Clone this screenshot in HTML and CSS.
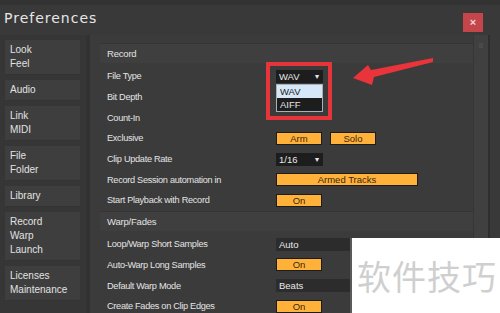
FILE: index.html
```html
<!DOCTYPE html>
<html>
<head>
  <title>Preferences</title>
  <link rel="stylesheet" href="styles.css">
</head>
<body>
  <div class="window">
    <div class="title-bar">
      <div class="title">Preferences</div>
      <div class="close-btn">&#215;</div>
    </div>

    <div class="body">
      <div class="sidebar">
        <div class="tab">Look<br>Feel</div>
        <div class="tab">Audio</div>
        <div class="tab">Link<br>MIDI</div>
        <div class="tab">File<br>Folder</div>
        <div class="tab">Library</div>
        <div class="tab">Record<br>Warp<br>Launch</div>
        <div class="tab">Licenses<br>Maintenance</div>
      </div>

      <div class="divider"></div>

      <div class="main">
        <div class="section-header">Record</div>
        <div class="row">
          <div class="label">File Type</div>
          <div class="control">
            <div class="dropdown-wrap">
              <div class="dropdown small">WAV <span class="arrow">&#9662;</span></div>
              <div class="dropdown-list">
                <div class="list-item selected">WAV</div>
                <div class="list-item">AIFF</div>
              </div>
              <div class="highlight-box"></div>
            </div>
          </div>
        </div>
        <div class="row">
          <div class="label">Bit Depth</div>
        </div>
        <div class="row">
          <div class="label">Count-In</div>
        </div>
        <div class="row">
          <div class="label">Exclusive</div>
          <div class="control">
            <div class="btn">Arm</div>
            <div class="btn">Solo</div>
          </div>
        </div>
        <div class="row">
          <div class="label">Clip Update Rate</div>
          <div class="control">
            <div class="dropdown small">1/16 <span class="arrow">&#9662;</span></div>
          </div>
        </div>
        <div class="row">
          <div class="label">Record Session automation in</div>
          <div class="control">
            <div class="btn wide">Armed Tracks</div>
          </div>
        </div>
        <div class="row">
          <div class="label">Start Playback with Record</div>
          <div class="control">
            <div class="btn">On</div>
          </div>
        </div>

        <div class="section-header">Warp/Fades</div>
        <div class="row">
          <div class="label">Loop/Warp Short Samples</div>
          <div class="control">
            <div class="dropdown flat">Auto</div>
          </div>
        </div>
        <div class="row">
          <div class="label">Auto-Warp Long Samples</div>
          <div class="control">
            <div class="btn">On</div>
          </div>
        </div>
        <div class="row">
          <div class="label">Default Warp Mode</div>
          <div class="control">
            <div class="dropdown flat">Beats</div>
          </div>
        </div>
        <div class="row">
          <div class="label">Create Fades on Clip Edges</div>
          <div class="control">
            <div class="btn">On</div>
          </div>
        </div>
      </div>

      <div class="scrollbar"><div class="scroll-thumb"></div></div>
    </div>
  </div>

  <!-- annotation arrow drawn on top of the screenshot -->
  <svg class="annotation" width="500" height="313" viewBox="0 0 500 313">
    <polygon points="353,78 368,65 371,70 433,58 433,62 374,77 372,85" fill="#e8343a"/>
  </svg>

  <div class="watermark">软件技巧</div>
</body>
</html>
```

FILE: styles.css
```css
body {
  margin: 0;
  width: 500px;
  height: 313px;
  overflow: hidden;
  position: relative;
  background-color: #393939;
  font-family: "Liberation Sans", Arial, sans-serif;
  color: #dcdcdc;
}

.window {
  border-top: 5px solid #333333;
}

.title-bar {
  display: flex;
  align-items: center;
  justify-content: space-between;
  height: 30px;
  padding: 0 17px 0 4px;
}

.title {
  font-family: "DejaVu Sans", sans-serif;
  font-size: 14px;
  letter-spacing: 1px;
  color: #e6e6e6;
  margin-top: -5px;
}

.close-btn {
  width: 20px;
  height: 19px;
  margin-top: 5px;
  background-color: #c4464b;
  color: #f4d4d4;
  font-size: 11px;
  font-weight: bold;
  line-height: 19px;
  text-align: center;
}

.body {
  display: flex;
  height: 278px;
}

/* left navigation */
.sidebar {
  width: 86px;
  padding: 5px 0 0 5px;
  box-sizing: border-box;
  display: flex;
  flex-direction: column;
  gap: 5px;
  background-color: #363636;
}

.tab {
  width: 75px;
  padding: 3px 5px;
  box-sizing: border-box;
  font-size: 10px;
  line-height: 14px;
  color: #e2e2e2;
  background-color: #3e3e3e;
  border-bottom: 1px solid #333333;
}

.divider {
  width: 4px;
  background-color: #323232;
}

/* main panel */
.main {
  width: 383px;
  padding: 8px 0 0 10px;
  box-sizing: border-box;
  background-color: #3b3b3b;
}

.section-header {
  height: 20px;
  line-height: 20px;
  padding-left: 7px;
  font-size: 9.5px;
  letter-spacing: -0.2px;
  color: #e2e2e2;
  background-color: #3f3f3f;
  border-top: 1px solid #353535;
  box-sizing: border-box;
  margin-bottom: 3px;
}

.row {
  display: flex;
  align-items: center;
  height: 20.7px;
  padding-left: 7px;
}

.label {
  width: 169px;
  flex-shrink: 0;
  font-size: 9.2px;
  letter-spacing: -0.3px;
  color: #e4e4e4;
}

.control {
  display: flex;
  gap: 8px;
  align-items: center;
}

.btn {
  width: 44px;
  height: 11px;
  line-height: 11px;
  text-align: center;
  font-size: 9.5px;
  color: #3a2810;
  background-color: #ffb13a;
  border: 1px solid #1e1c18;
}

.btn.wide {
  width: 140px;
}

.dropdown {
  height: 13px;
  line-height: 13px;
  font-size: 9.5px;
  color: #e8e8e8;
  background-color: #1d1d1d;
  padding-left: 3px;
  box-sizing: border-box;
}

.dropdown.small {
  width: 47px;
  display: flex;
  justify-content: space-between;
  padding-right: 4px;
}

.dropdown .arrow {
  font-size: 8px;
}

.dropdown.flat {
  width: 90px;
  background-color: #2c2c2c;
}

.dropdown-wrap {
  position: relative;
}

.dropdown-list {
  position: absolute;
  top: 14px;
  left: 0;
  width: 47px;
  border: 1px solid #a8b0b8;
  box-sizing: border-box;
  background-color: #1d1d1d;
  z-index: 2;
}

.list-item {
  height: 13px;
  line-height: 13px;
  padding-left: 3px;
  font-size: 9.5px;
  color: #e4e4e4;
}

.list-item.selected {
  background-color: #d6e8f8;
  color: #1c1c1c;
}

.highlight-box {
  position: absolute;
  top: -8px;
  left: -10px;
  width: 66px;
  height: 58px;
  border: 4px solid #e5343a;
  box-sizing: border-box;
  z-index: 3;
}

.scrollbar {
  width: 14px;
  background-color: #404040;
  border-left: 1px solid #363636;
  border-right: 2px solid #2e2e2e;
}

.scroll-thumb {
  width: 4px;
  height: 5px;
  margin: 8px auto 0;
  background-color: #4a4a4a;
}

.annotation {
  position: absolute;
  top: 0;
  left: 0;
  pointer-events: none;
}

.watermark {
  position: absolute;
  left: 350px;
  top: 238px;
  width: 150px;
  height: 75px;
  padding-left: 5px;
  box-sizing: border-box;
  background-color: #ffffff;
  border-left: 2px solid #5a5a5a;
  font-family: "Noto Sans CJK SC", sans-serif;
  font-size: 34px;
  line-height: 75px;
  color: #cfcfcf;
  letter-spacing: 1px;
}
```
